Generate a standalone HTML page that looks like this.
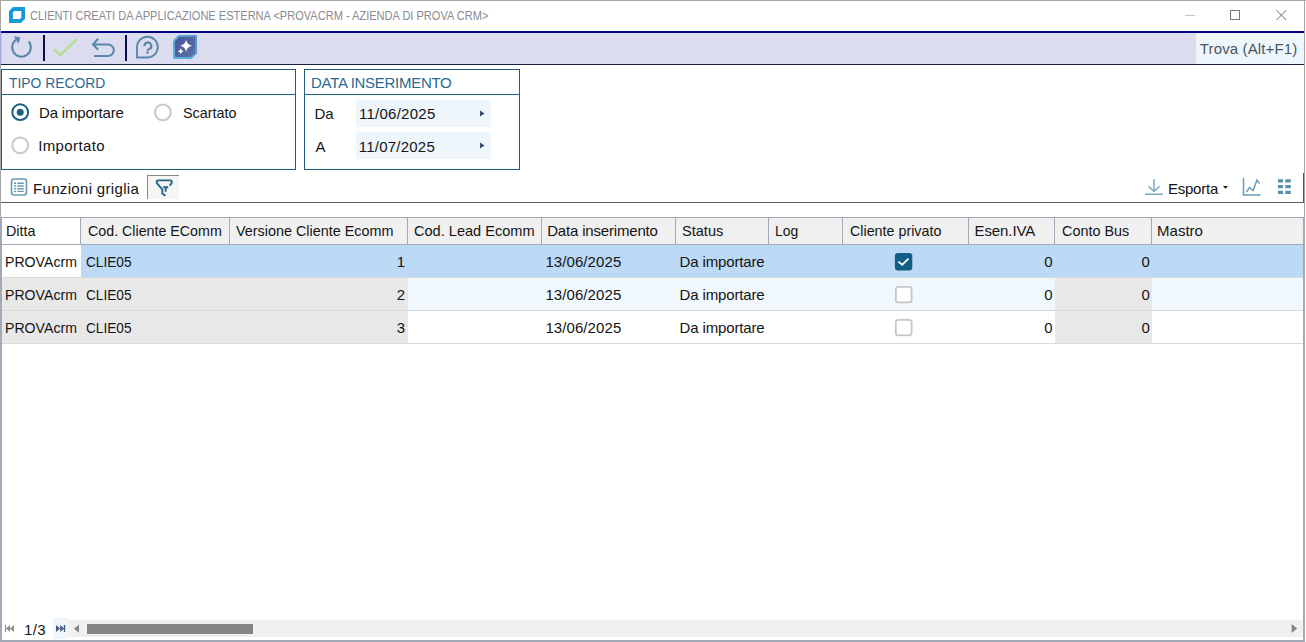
<!DOCTYPE html>
<html><head><meta charset="utf-8">
<style>
*{margin:0;padding:0;box-sizing:border-box}
html,body{width:1306px;height:642px;overflow:hidden;background:#fff}
body{position:relative;font-family:"Liberation Sans",sans-serif;font-size:14.6px;color:#141414}
.a{position:absolute}
.t{position:absolute;white-space:nowrap;line-height:1}
svg{position:absolute;overflow:visible}
</style></head><body>
<!-- window border -->
<div class="a" style="left:0;top:0;width:1306px;height:1px;background:#a6a6a6"></div>
<div class="a" style="left:0;top:0;width:1px;height:642px;background:#a6a6a6"></div>
<div class="a" style="left:1304px;top:0;width:1px;height:642px;background:#a6a6a6"></div>

<!-- title icon -->
<svg style="left:0;top:0" width="40" height="31"><path d="M13 7 H25 V18.8 L21 23 H9 V11 Z" fill="#1799d6"/><path d="M14.3 10.9 H21.3 V17.8 L20 19.1 H12.9 V12.3 Z" fill="#fff"/></svg>
<!-- window controls -->
<div class="a" style="left:1185px;top:15px;width:10px;height:1px;background:#c4c4c4"></div>
<div class="a" style="left:1230px;top:10px;width:10px;height:10px;border:1px solid #7a7a7a"></div>
<svg style="left:1276px;top:10px" width="11" height="11"><path d="M0.5 0.3 L10.2 10 M10.2 0.3 L0.5 10" stroke="#6e6e6e" stroke-width="1"/></svg>

<!-- toolbar -->
<div class="a" style="left:1px;top:31px;width:1303px;height:2px;background:#000088"></div>
<div class="a" style="left:1px;top:33px;width:1303px;height:31px;background:#dcdcf0"></div>
<div class="a" style="left:1196px;top:33px;width:108px;height:31px;background:#eef6fc"></div>
<div class="a" style="left:1px;top:64px;width:1303px;height:1px;background:#1c1c3c"></div>
<div class="a" style="left:0;top:31px;width:1px;height:33px;background:#a4a4dc"></div><div class="a" style="left:1px;top:33px;width:1px;height:31px;background:#c8c8ec"></div>
<!-- refresh -->
<svg style="left:0;top:0" width="60" height="66"><path d="M28.7 41.4 A9.3 9.3 0 1 1 18.6 38.5" fill="none" stroke="#5888a8" stroke-width="2"/><path d="M14.4 37.3 L19 38.2 L17.8 42.8" fill="none" stroke="#5888a8" stroke-width="2"/></svg>
<div class="a" style="left:43px;top:35px;width:2px;height:26px;background:#0a0a50"></div>
<!-- check -->
<svg style="left:0;top:0" width="90" height="66"><path d="M55 50.2 L60.6 55 L76 39.8" fill="none" stroke="#b8dc94" stroke-width="2.6" stroke-linecap="round"/></svg>
<!-- undo -->
<svg style="left:0;top:0" width="130" height="66"><path d="M98.2 38.8 L93 44.4 L98.2 49.8 M93 44.4 H108 A5.8 5.8 0 0 1 108 56 H94" fill="none" stroke="#5888a8" stroke-width="2"/></svg>
<div class="a" style="left:125px;top:35px;width:2px;height:26px;background:#0a0a50"></div>
<!-- help -->
<svg style="left:0;top:0" width="170" height="66"><path d="M137 57.5 V47.3 A10.4 10.4 0 1 1 147.4 57.5 Z" fill="none" stroke="#5888a8" stroke-width="1.9"/><path d="M144.5 46.2 A3.4 3.4 0 1 1 149.7 48.8 Q147.6 49.6 147.5 50.6" fill="none" stroke="#5888a8" stroke-width="2.2"/><circle cx="147.5" cy="52.5" r="1.25" fill="#5888a8"/></svg>
<!-- AI -->
<svg style="left:0;top:0" width="210" height="66"><defs><linearGradient id="g1" x1="0" y1="0" x2="1" y2="1"><stop offset="0" stop-color="#46579a"/><stop offset="1" stop-color="#5a72aa"/></linearGradient><linearGradient id="g2" x1="1" y1="0" x2="0" y2="1"><stop offset="0" stop-color="#5b90c8"/><stop offset="1" stop-color="#5ab6e6"/></linearGradient></defs><path d="M178.4 35 H197 V53.5 L191.5 59 H173 V40.4 Z" fill="url(#g2)"/><path d="M179.2 37 H195 V52.7 L190.7 57 H175 V41.2 Z" fill="url(#g1)"/><path d="M186.1 39.699999999999996 Q187.01 44.88 192.2 45.8 Q187.01 46.71 186.1 51.9 Q185.19 46.71 180.0 45.8 Q185.19 44.88 186.1 39.699999999999996 Z" fill="#fff"/><path d="M180.7 48.300000000000004 Q181.22 50.68 183.6 51.2 Q181.22 51.72 180.7 54.1 Q180.18 51.72 177.79999999999998 51.2 Q180.18 50.68 180.7 48.300000000000004 Z" fill="#fff"/></svg>

<!-- TIPO RECORD group -->
<div class="a" style="left:1px;top:69px;width:295px;height:101px;border:1px solid #245f80"></div>
<div class="a" style="left:1px;top:94px;width:295px;height:1px;background:#245f80"></div>
<svg style="left:0;top:0" width="300" height="170"><circle cx="20.2" cy="112.2" r="7.9" fill="none" stroke="#1a5f80" stroke-width="2"/><circle cx="20.2" cy="112.2" r="3.5" fill="#1a5f80"/><circle cx="20.2" cy="145.3" r="7.9" fill="none" stroke="#c8c8c8" stroke-width="2"/><circle cx="162.9" cy="112.4" r="7.9" fill="none" stroke="#c8c8c8" stroke-width="2"/></svg>

<!-- DATA INSERIMENTO group -->
<div class="a" style="left:304px;top:69px;width:216px;height:101px;border:1px solid #245f80"></div>
<div class="a" style="left:304px;top:94px;width:216px;height:1px;background:#245f80"></div>
<div class="a" style="left:356px;top:100px;width:135px;height:27px;background:#eef6fc"></div>
<div class="a" style="left:356px;top:132px;width:135px;height:27px;background:#eef6fc"></div>
<svg style="left:0;top:0" width="500" height="170"><path d="M480 110.5 L484.5 113.5 L480 116.5 Z M480 142.5 L484.5 145.5 L480 148.5 Z" fill="#3a4a6a"/></svg>

<!-- funzioni griglia bar -->
<svg style="left:0;top:0" width="30" height="200"><rect x="11.5" y="179" width="15" height="16" rx="2.5" fill="none" stroke="#6a9ab4" stroke-width="1.6"/><path d="M14 183.2 H16 M17.2 183.2 H23.8 M14 186 H16 M17.2 186 H23.8 M14 188.7 H16 M17.2 188.7 H23.8 M14 191.4 H16 M17.2 191.4 H23.8" stroke="#6a9ab4" stroke-width="1.4"/></svg>
<div class="a" style="left:147px;top:175px;width:32px;height:24px;background:#f5f5f5;border-left:1px solid #888;border-top:1px solid #888"></div>
<svg style="left:0;top:0" width="180" height="200"><path d="M169.6 185.6 L171.4 183.6 Q172.8 180.4 169.8 180.4 H158.6 Q155.6 180.4 157.2 183.6 L162.3 189.3 V193.4 L165.4 195.8" fill="none" stroke="#1f6585" stroke-width="1.9" stroke-linejoin="round"/><path d="M163.2 187.3 H168.2 M165.7 187.3 V191.8" fill="none" stroke="#1f6585" stroke-width="1.9"/></svg>

<svg style="left:0;top:0" width="1306" height="205"><path d="M1154 179.3 V191.5 M1148.5 186.2 L1154 191.5 L1159.6 186.2 M1145 194.3 H1163" fill="none" stroke="#7aa8c0" stroke-width="1.5"/><path d="M1223 186 H1228 L1225.5 188.8 Z" fill="#111"/><path d="M1243.5 178 V195 H1260.6" fill="none" stroke="#6a9ab4" stroke-width="1.5"/><path d="M1246.4 192.1 L1249.4 187.5 L1253.1 190.5 L1256.9 180.2 L1259.6 183.5" fill="none" stroke="#6a9ab4" stroke-width="1.5"/><path d="M1278 179.2 h5 v3.2 h-5z M1285.3 179.2 h5.5 v3.2 h-5.5z M1278 185.1 h5 v3.2 h-5z M1285.3 185.1 h5.5 v3.2 h-5.5z M1278 190.8 h5 v3.2 h-5z M1285.3 190.8 h5.5 v3.2 h-5.5z" fill="#5a8fae"/></svg>
<div class="a" style="left:1303px;top:173px;width:1px;height:30px;background:#555"></div>
<div class="a" style="left:1px;top:202px;width:1303px;height:1px;background:#5a5a5a"></div>

<!-- grid -->
<div class="a" style="left:0;top:217px;width:1305px;height:425px;border-left:2px solid #a2aab8;border-top:1px solid #a2aab8;border-right:2px solid #a2aab8;border-bottom:2px solid #a2aab8"></div>
<div class="a" style="left:2px;top:218px;width:1301px;height:26px;background:#f0f0f0"></div>
<div class="a" style="left:2px;top:218px;width:78px;height:26px;background:#fff"></div>
<div class="a" style="left:2px;top:244px;width:1301px;height:1px;background:#a2aab8"></div>
<div class="a" style="left:80px;top:218px;width:1px;height:26px;background:#a2aab8"></div>
<div class="a" style="left:229px;top:218px;width:1px;height:26px;background:#a2aab8"></div>
<div class="a" style="left:407px;top:218px;width:1px;height:26px;background:#a2aab8"></div>
<div class="a" style="left:541px;top:218px;width:1px;height:26px;background:#a2aab8"></div>
<div class="a" style="left:675px;top:218px;width:1px;height:26px;background:#a2aab8"></div>
<div class="a" style="left:768px;top:218px;width:1px;height:26px;background:#a2aab8"></div>
<div class="a" style="left:842px;top:218px;width:1px;height:26px;background:#a2aab8"></div>
<div class="a" style="left:968px;top:218px;width:1px;height:26px;background:#a2aab8"></div>
<div class="a" style="left:1054px;top:218px;width:1px;height:26px;background:#a2aab8"></div>
<div class="a" style="left:1151px;top:218px;width:1px;height:26px;background:#a2aab8"></div>
<div class="a" style="left:2px;top:245px;width:79px;height:32px;background:#fff"></div>
<div class="a" style="left:81px;top:245px;width:1222px;height:32px;background:#bcd9f5"></div>
<div class="a" style="left:2px;top:277px;width:1301px;height:1px;background:#d9d9d9"></div>
<svg style="left:895px;top:252.6px" width="18" height="18"><rect x="-0.1" y="-0.1" width="17.4" height="17.5" rx="3" fill="#115f84"/><path d="M3.4 8.6 L7.2 11.7 L13.5 5.7" fill="none" stroke="#fff" stroke-width="1.8"/></svg>
<div class="a" style="left:2px;top:278px;width:1301px;height:32px;background:#f0f8fe"></div>
<div class="a" style="left:2px;top:278px;width:406px;height:32px;background:#e8e8e8"></div>
<div class="a" style="left:1055px;top:278px;width:97px;height:32px;background:#e8e8e8"></div>
<div class="a" style="left:2px;top:310px;width:1301px;height:1px;background:#d9d9d9"></div>
<svg style="left:895px;top:285.6px" width="17" height="17"><rect x="0.8" y="0.8" width="15.8" height="15.6" rx="2.6" fill="#fff" stroke="#c6c6c6" stroke-width="1.8"/></svg>
<div class="a" style="left:2px;top:311px;width:1301px;height:32px;background:#fff"></div>
<div class="a" style="left:2px;top:311px;width:406px;height:32px;background:#e8e8e8"></div>
<div class="a" style="left:1055px;top:311px;width:97px;height:32px;background:#e8e8e8"></div>
<div class="a" style="left:2px;top:343px;width:1301px;height:1px;background:#d9d9d9"></div>
<svg style="left:895px;top:318.6px" width="17" height="17"><rect x="0.8" y="0.8" width="15.8" height="15.6" rx="2.6" fill="#fff" stroke="#c6c6c6" stroke-width="1.8"/></svg>

<!-- bottom bar -->
<svg style="left:0;top:0" width="1306" height="642"><rect x="5" y="625" width="1.1" height="7" fill="#8a8a8a"/><path d="M6.1 628.5 L10 625 V632 Z M10 628.5 L13.9 625 V632 Z" fill="#8a8a8a"/></svg>
<div class="a" style="left:53px;top:618px;width:15px;height:21px;background:#eef6fc"></div>
<svg style="left:0;top:0" width="1306" height="642"><path d="M56 625 L60.2 628.5 L56 632 Z M60.2 625 L64.2 628.5 L60.2 632 Z" fill="#4a5f80"/><path d="M64.5 625 V632" stroke="#4a5f80" stroke-width="1.4"/></svg>
<div class="a" style="left:68px;top:620px;width:1235px;height:17px;background:#f0f0f0"></div>
<svg style="left:0;top:0" width="1306" height="642"><path d="M79 624.6 L74 628.7 L79 632.8 Z M1291.6 624 L1297.2 628.5 L1291.6 633 Z" fill="#858585"/></svg>
<div class="a" style="left:87px;top:624px;width:166px;height:10px;background:#858585"></div>

<div class="t" style="left:30.4px;transform:scaleX(0.8769);transform-origin:0 0;top:9.93px;font-size:12.6px;color:#8a8a92">CLIENTI CREATI DA APPLICAZIONE ESTERNA &lt;PROVACRM - AZIENDA DI PROVA CRM&gt;</div>
<div class="t" style="left:1199.8px;top:41.0px;font-size:15px;color:#4a5564;letter-spacing:0.129px">Trova (Alt+F1)</div>
<div class="t" style="left:8.5px;transform:scaleX(0.9235);transform-origin:0 0;top:75.1px;font-size:15px;color:#2c6a90">TIPO RECORD</div>
<div class="t" style="left:39px;top:105.3px;font-size:15px;letter-spacing:-0.169px">Da importare</div>
<div class="t" style="left:38.2px;top:138.1px;font-size:15px;letter-spacing:0.385px">Importato</div>
<div class="t" style="left:182.5px;transform:scaleX(0.9560);transform-origin:0 0;top:105.1px;font-size:15px">Scartato</div>
<div class="t" style="left:311px;top:75.1px;font-size:15px;color:#2c6a90;letter-spacing:-0.285px">DATA INSERIMENTO</div>
<div class="t" style="left:314.5px;top:105.7px;font-size:15px">Da</div>
<div class="t" style="left:315.5px;top:138.5px;font-size:15px">A</div>
<div class="t" style="left:359px;top:105.7px;font-size:15px;letter-spacing:0.254px">11/06/2025</div>
<div class="t" style="left:358.8px;top:138.5px;font-size:15px;letter-spacing:0.22px">11/07/2025</div>
<div class="t" style="left:33px;top:180.9px;font-size:15px;letter-spacing:0.331px">Funzioni griglia</div>
<div class="t" style="left:1167.9px;top:181.1px;font-size:15px;letter-spacing:-0.209px">Esporta</div>
<div class="t" style="left:5.74px;transform:scaleX(0.9561);transform-origin:0 0;top:223.0px;font-size:15px">Ditta</div>
<div class="t" style="left:87.6px;transform:scaleX(0.9495);transform-origin:0 0;top:223.2px;font-size:15px">Cod. Cliente EComm</div>
<div class="t" style="left:236.1px;transform:scaleX(0.9581);transform-origin:0 0;top:223.1px;font-size:15px">Versione Cliente Ecomm</div>
<div class="t" style="left:414.0px;transform:scaleX(0.9704);transform-origin:0 0;top:223.1px;font-size:15px">Cod. Lead Ecomm</div>
<div class="t" style="left:547.2px;top:223.1px;font-size:15px;letter-spacing:-0.176px">Data inserimento</div>
<div class="t" style="left:682.3px;transform:scaleX(0.9700);transform-origin:0 0;top:223.1px;font-size:15px">Status</div>
<div class="t" style="left:774.67px;transform:scaleX(0.9287);transform-origin:0 0;top:223.1px;font-size:15px">Log</div>
<div class="t" style="left:849.6px;transform:scaleX(0.9527);transform-origin:0 0;top:223.1px;font-size:15px">Cliente privato</div>
<div class="t" style="left:974.5px;top:223.1px;font-size:15px;letter-spacing:-0.088px">Esen.IVA</div>
<div class="t" style="left:1061.6px;transform:scaleX(0.9591);transform-origin:0 0;top:223.1px;font-size:15px">Conto Bus</div>
<div class="t" style="left:1157.1px;top:223.1px;font-size:15px">Mastro</div>
<div class="t" style="left:23.9px;top:622.3px;font-size:15px;letter-spacing:0.395px">1/3</div>
<div class="t" style="left:5.36px;transform:scaleX(0.9417);transform-origin:0 0;top:254.3px;font-size:15px">PROVAcrm</div>
<div class="t" style="left:85.6px;transform:scaleX(0.9097);transform-origin:0 0;top:254.3px;font-size:15px">CLIE05</div>
<div class="t" style="left:205.0px;width:200px;text-align:right;top:254.3px;font-size:15px">1</div>
<div class="t" style="left:545.4px;top:254.3px;font-size:15px;letter-spacing:0.085px">13/06/2025</div>
<div class="t" style="left:679.6px;top:254.3px;font-size:15px;letter-spacing:-0.15px">Da importare</div>
<div class="t" style="left:852.7px;width:200px;text-align:right;top:254.3px;font-size:15px">0</div>
<div class="t" style="left:949.9px;width:200px;text-align:right;top:254.3px;font-size:15px">0</div>
<div class="t" style="left:5.36px;transform:scaleX(0.9417);transform-origin:0 0;top:287.3px;font-size:15px">PROVAcrm</div>
<div class="t" style="left:85.6px;transform:scaleX(0.9097);transform-origin:0 0;top:287.3px;font-size:15px">CLIE05</div>
<div class="t" style="left:205.0px;width:200px;text-align:right;top:287.3px;font-size:15px">2</div>
<div class="t" style="left:545.4px;top:287.3px;font-size:15px;letter-spacing:0.085px">13/06/2025</div>
<div class="t" style="left:679.6px;top:287.3px;font-size:15px;letter-spacing:-0.15px">Da importare</div>
<div class="t" style="left:852.7px;width:200px;text-align:right;top:287.3px;font-size:15px">0</div>
<div class="t" style="left:949.9px;width:200px;text-align:right;top:287.3px;font-size:15px">0</div>
<div class="t" style="left:5.36px;transform:scaleX(0.9417);transform-origin:0 0;top:320.3px;font-size:15px">PROVAcrm</div>
<div class="t" style="left:85.6px;transform:scaleX(0.9097);transform-origin:0 0;top:320.3px;font-size:15px">CLIE05</div>
<div class="t" style="left:205.0px;width:200px;text-align:right;top:320.3px;font-size:15px">3</div>
<div class="t" style="left:545.4px;top:320.3px;font-size:15px;letter-spacing:0.085px">13/06/2025</div>
<div class="t" style="left:679.6px;top:320.3px;font-size:15px;letter-spacing:-0.15px">Da importare</div>
<div class="t" style="left:852.7px;width:200px;text-align:right;top:320.3px;font-size:15px">0</div>
<div class="t" style="left:949.9px;width:200px;text-align:right;top:320.3px;font-size:15px">0</div>
</body></html>
